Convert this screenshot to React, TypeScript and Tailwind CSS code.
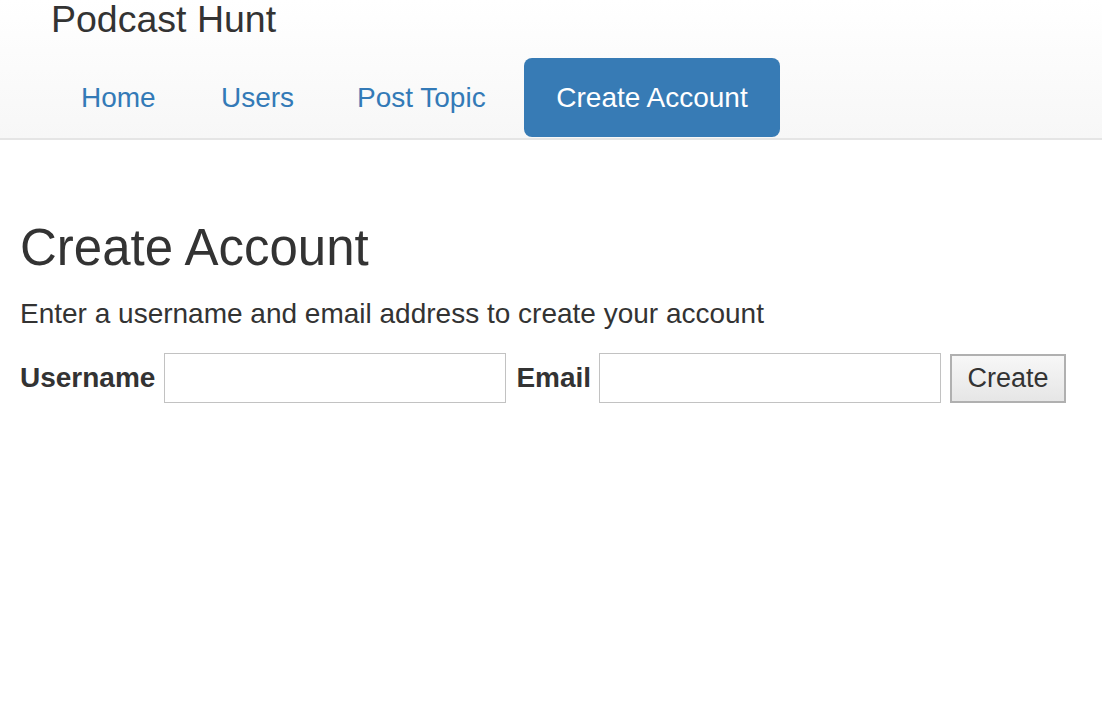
export default function App() {
  const links = [
    { label: "Home", w: "w-[140px]" },
    { label: "Users", w: "w-[136px]" },
    { label: "Post Topic", w: "w-[200px]" },
  ];
  return (
    <div className="min-h-screen bg-white text-[#333] font-['Liberation_Sans',Arial,sans-serif]">
      <nav className="h-[140px] border-b-2 border-[#e5e5e5] bg-gradient-to-b from-white to-[#f7f7f7]">
        <div className="pl-[51px] h-[40px] flex items-center text-[37.5px] leading-none">Podcast Hunt</div>
        <ul className="flex pl-[48px] mt-[18px]">
          {links.map((l) => (
            <li key={l.label} className={`${l.w} pl-[33px] h-[79px] flex items-center text-[28px] text-[#337ab7]`}>
              {l.label}
            </li>
          ))}
          <li className="w-[256px] h-[79px] flex items-center justify-center text-[28px] text-white bg-[#377bb5] rounded-[8px]">
            Create Account
          </li>
        </ul>
      </nav>
      <main className="px-[20px]">
        <h1 className="text-[51px] leading-none mt-[82px]">Create Account</h1>
        <p className="text-[28px] mt-[27px] leading-none">Enter a username and email address to create your account</p>
        <form className="flex items-center mt-[25px]">
          <label className="text-[28px] font-bold mr-[9px]">Username</label>
          <input className="w-[342px] h-[50px] border border-[#c2c2c2] outline-none" />
          <label className="text-[28px] font-bold ml-[10px] mr-[8px]">Email</label>
          <input className="w-[342px] h-[50px] border border-[#c2c2c2] outline-none" />
          <button
            type="button"
            className="ml-[9px] w-[116px] h-[49px] border-2 border-[#b0b0b0] bg-gradient-to-b from-[#f7f7f7] to-[#e6e6e6] text-[27px] text-[#333]"
          >
            Create
          </button>
        </form>
      </main>
    </div>
  );
}
